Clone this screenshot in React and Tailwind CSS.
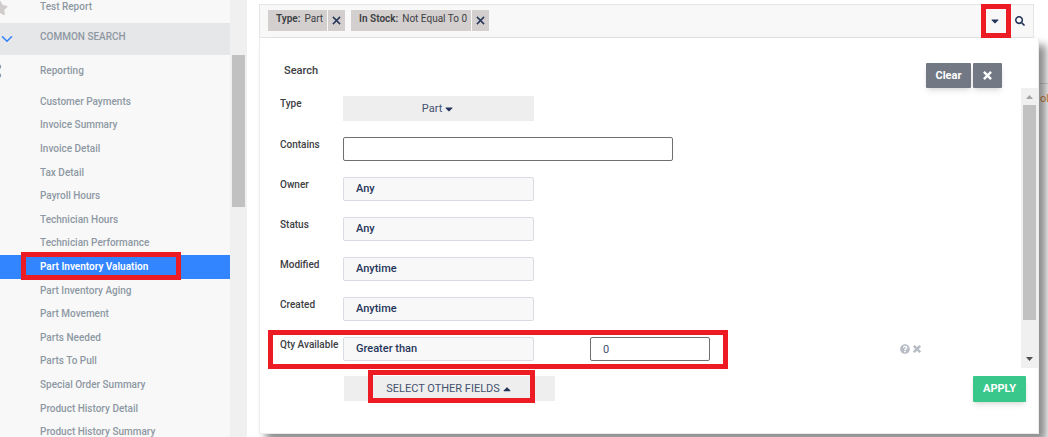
import React, { useState } from 'react';
import { FaStar, FaShareAlt, FaSearch, FaCaretDown, FaCaretUp, FaQuestionCircle } from 'react-icons/fa';
import { ChevronDown } from 'lucide-react';
import clsx from 'clsx';

const REPORTS = [
  'Customer Payments',
  'Invoice Summary',
  'Invoice Detail',
  'Tax Detail',
  'Payroll Hours',
  'Technician Hours',
  'Technician Performance',
  'Part Inventory Valuation',
  'Part Inventory Aging',
  'Part Movement',
  'Parts Needed',
  'Parts To Pull',
  'Special Order Summary',
  'Product History Detail',
  'Product History Summary'
];

const SELECT_FIELDS = [
  { id: 'owner', label: 'Owner', options: ['Any'] },
  { id: 'status', label: 'Status', options: ['Any'] },
  { id: 'modified', label: 'Modified', options: ['Anytime'] },
  { id: 'created', label: 'Created', options: ['Anytime'] }
];

// Red frame laid over whatever its parent holds
const Highlight = ({ className }) => (
  <span className={clsx('pointer-events-none absolute z-10 border-5 border-[#ed1c24]', className)} />
);

const Cross = ({ className, strokeWidth = 1.7 }) => (
  <svg viewBox="0 0 10 10" className={className} fill="none" stroke="currentColor" strokeWidth={strokeWidth}>
    <path d="M1 1l8 8M9 1l-8 8" />
  </svg>
);

const Sidebar = () => {
  const [active, setActive] = useState('Part Inventory Valuation');

  return (
    <aside className="flex w-[247px] shrink-0 overflow-hidden bg-[#f8f8f8] text-[10px] font-medium text-[#8e98a3]">
      <nav className="min-w-0 flex-1">
        <a href="#test" className="flex h-[23px] items-start">
          <FaStar className="-ml-2 size-4 text-[#d0cccc]" />
          <span className="ml-8">Test Report</span>
        </a>
        <button type="button" className="flex h-8 w-full items-center bg-[#e6e7e8] pb-1">
          <ChevronDown className="-ml-[2px] mt-1 size-[18px] text-[#2f80ff]" />
          <span className="ml-6">COMMON SEARCH</span>
        </button>
        <a href="#reporting" className="flex h-[35px] items-center pb-1">
          <FaShareAlt className="-ml-3 size-[14px] text-[#8496ab]" />
          <span className="ml-[38px]">Reporting</span>
        </a>
        <ul className="grid h-[354px] auto-rows-fr">
          {REPORTS.map((name) => (
            <li key={name} className="relative">
              <a
                href="#report"
                onClick={() => setActive(name)}
                className={clsx('flex h-full items-center pl-10', name === active && 'bg-[#3385ff] font-semibold text-white')}
              >
                {name}
              </a>
              {name === 'Part Inventory Valuation' && <Highlight className="-top-[3px] left-[21px] h-7 w-40" />}
            </li>
          ))}
        </ul>
      </nav>
      <div className="w-[17px] bg-[#f0f0f0] px-[2px] pt-[55px]">
        <div className="h-38 bg-[#c1c1c1]" />
      </div>
    </aside>
  );
};

const Chip = ({ label, value }) => (
  <span className="flex h-[21px] items-stretch gap-px text-[#3d4043]">
    <span className="flex items-center bg-[#d3cfcf] pr-1 pb-[2px] pl-2">
      <b className="mr-1 font-semibold">{label}:</b>
      {value}
    </span>
    <button type="button" aria-label={`Remove ${label}`} className="flex w-[17px] items-center justify-center bg-[#d3cfcf] text-[#2b3a5c]">
      <Cross className="size-[9px]" />
    </button>
  </span>
);

const FilterBar = () => (
  <div className="mr-[14px] flex h-[34px] items-center border border-[#e5e5e5] bg-[#f8f8f8] pl-2">
    <div className="flex gap-[6px] pb-[2px] text-[10px]">
      <Chip label="Type" value="Part" />
      <Chip label="In Stock" value="Not Equal To 0" />
    </div>
    <div className="ml-auto flex items-center self-stretch text-[#23345a]">
      <button type="button" aria-label="Show filters" className="relative -my-px flex w-[30px] items-center justify-center self-stretch pr-[2px]">
        <FaCaretDown className="size-3" />
        <Highlight className="inset-0" />
      </button>
      <button type="button" aria-label="Search" className="px-1 pr-2">
        <FaSearch className="size-[10px]" />
      </button>
    </div>
  </div>
);

const Field = ({ id, label, children }) => (
  <div className="flex h-10 items-start">
    <label htmlFor={id} className="w-[63px] shrink-0 text-[10px] leading-4 whitespace-nowrap">
      {label}
    </label>
    {children}
  </div>
);

const Select = ({ id, options }) => (
  <select
    id={id}
    className="h-6 w-[191px] appearance-none rounded-xs border border-[#d9dce3] bg-[#f8f8f8] px-3 text-[#26365a]"
  >
    {options.map((option) => (
      <option key={option}>{option}</option>
    ))}
  </select>
);

const ScrollTrack = () => (
  <div className="flex w-[17px] flex-col items-center bg-[#f0f0f0]">
    <svg viewBox="0 0 17 17" className="size-[17px] fill-[#a3a3a3]">
      <path d="M5 11l3.500-4 3.500 4z" />
    </svg>
    <div className="h-[215px] w-[13px] bg-[#c1c1c1]" />
    <svg viewBox="0 0 17 17" className="mt-auto size-[17px] fill-[#505050]">
      <path d="M5 6l3.500 4 3.500-4z" />
    </svg>
  </div>
);

const SearchPanel = () => (
  <section className="relative mr-[9px] flex h-[396px] flex-col border border-t-0 border-[#ececec] bg-white font-medium text-[#3d4043] shadow-[7px_7px_8px_rgba(0,0,0,0.45)]">
    <header className="flex h-[50px] items-end justify-between pr-9 pl-6">
      <h2 className="self-end pb-[10px]">Search</h2>
      <div className="flex gap-[2px] text-white">
        <button type="button" className="h-[25px] w-[45px] rounded-[1px] bg-[#727984] font-bold shadow-md">Clear</button>
        <button type="button" aria-label="Close" className="flex h-[25px] w-[29px] items-center justify-center rounded-[1px] bg-[#727984] shadow-md">
          <Cross className="size-[9px]" strokeWidth={2.6} />
        </button>
      </div>
    </header>

    <div className="flex h-[280px]">
      <form className="min-w-0 flex-1 pt-2 pl-5">
        <Field id="type" label="Type">
          <button id="type" type="button" className="flex h-[25px] w-[191px] items-center justify-center gap-px bg-[#eee] font-normal text-[#44516e]">
            Part <FaCaretDown className="size-3 text-[#23345a]" />
          </button>
        </Field>
        <div className="pt-px">
          <Field id="contains" label="Contains">
            <input id="contains" type="text" className="h-6 w-[330px] rounded-xs border border-[#6f7072] px-3" />
          </Field>
          {SELECT_FIELDS.map(({ id, label, options }) => (
            <Field key={id} id={id} label={label}>
              <Select id={id} options={options} />
            </Field>
          ))}
          <div className="relative">
            <Field id="qty" label="Qty Available">
              <Select id="qty" options={['Greater than']} />
              <input
                type="text"
                aria-label="Quantity"
                defaultValue="0"
                className="ml-14 h-6 w-[120px] rounded-xs border border-[#6f7072] px-3 font-normal text-[#44516e]"
              />
              <div className="mr-[100px] ml-auto flex h-6 items-center gap-[3px] text-[#b7bcc5]">
                <button type="button" aria-label="Help"><FaQuestionCircle className="size-[10px]" /></button>
                <button type="button" aria-label="Remove field"><Cross className="size-2" strokeWidth={3} /></button>
              </div>
            </Field>
            <Highlight className="-top-[7px] -left-3 h-[39px] w-[460px]" />
          </div>
        </div>
      </form>
      <ScrollTrack />
    </div>

    <footer className="flex items-start justify-between pt-2 pr-3 pl-[84px]">
      <button type="button" className="relative flex h-[25px] w-[211px] items-center justify-center gap-px bg-[#eee] font-normal text-[#44516e]">
        SELECT OTHER FIELDS <FaCaretUp className="size-3 text-[#23345a]" />
        <Highlight className="-top-[6px] left-6 h-[33px] w-[167px]" />
      </button>
      <button type="submit" className="h-[26px] w-[53px] rounded-[1px] bg-[#3ac78b] font-bold text-white shadow-md">APPLY</button>
    </footer>
  </section>
);

export default function App() {
  return (
    <div className="flex h-screen overflow-hidden bg-white font-['Roboto',sans-serif] text-[11px] leading-[14px]">
      <Sidebar />
      <main className="relative min-w-0 flex-1 pt-1 pl-3">
        <div className="absolute top-[83px] right-0 h-[354px] w-2 border-t border-[#ddd] pt-2 text-[#e08a3c]">ol</div>
        <FilterBar />
        <SearchPanel />
      </main>
    </div>
  );
}
